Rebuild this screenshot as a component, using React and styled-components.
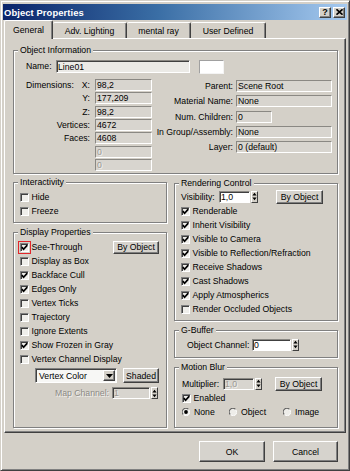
import styled, { createGlobalStyle } from "styled-components";

const GlobalStyle = createGlobalStyle`
  * { box-sizing: border-box; }
  html, body { margin: 0; padding: 0; background: #d4d0c8; }
  body {
    font-family: "Liberation Sans", Arial, sans-serif;
    font-size: 8.7px;
    color: #000;
  }
`;

function CheckMark() {
  return (
    <svg width="7" height="7" viewBox="0 0 7 7">
      <path d="M0.8 3.1 L2.6 5.2 L6.3 1.1" fill="none" stroke="#000" strokeWidth="1.7" />
    </svg>
  );
}

function Check({ label, checked, marked }) {
  return (
    <CheckItem>
      <CheckBox $marked={marked}>{checked && <CheckMark />}</CheckBox>
      <span>{label}</span>
    </CheckItem>
  );
}

function Radio({ label, selected }) {
  return (
    <RadioItem>
      <svg width="8" height="8" viewBox="0 0 8 8">
        <circle cx="4" cy="4" r="3.4" fill="#eeede9" />
        <path d="M1.3 6.5 A3.5 3.5 0 0 1 6.5 1.3" stroke="#606060" strokeWidth="1.1" fill="none" />
        <path d="M6.7 1.6 A3.5 3.5 0 0 1 1.6 6.7" stroke="#ffffff" strokeWidth="1" fill="none" />
        {selected && <circle cx="4" cy="4" r="1.9" fill="#000" />}
      </svg>
      <span>{label}</span>
    </RadioItem>
  );
}

function Spinner() {
  return (
    <Spin>
      <svg width="5" height="9" viewBox="0 0 5 9">
        <path d="M2.5 0.8 L4.6 3.4 L0.4 3.4 Z M0.4 5.6 L4.6 5.6 L2.5 8.2 Z" fill="#000" />
      </svg>
    </Spin>
  );
}

export default function App() {
  return (
    <>
      <GlobalStyle />
      <Window>
        <TitleBar>
          <Title>Object Properties</Title>
          <CapButton>?</CapButton>
          <CapButton>
            <svg width="7" height="6" viewBox="0 0 7 6">
              <path d="M0.5 0.3 L6.5 5.7 M6.5 0.3 L0.5 5.7" stroke="#000" strokeWidth="1.6" />
            </svg>
          </CapButton>
        </TitleBar>

        <Tabs>
          <Tab $w={49} $active>General</Tab>
          <Tab $w={74}>Adv. Lighting</Tab>
          <Tab $w={64}>mental ray</Tab>
          <Tab $w={75}>User Defined</Tab>
        </Tabs>

        <Panel>
          <Group $h={124} $pad="9px 0 0 12px">
            <Legend>Object Information</Legend>
            <NameRow>
              <NameLabel>Name:</NameLabel>
              <Field $w={134} $h={13} $tone="light" $deep>Line01</Field>
              <Swatch />
            </NameRow>
            <InfoColumns>
              <DimGrid>
                <DimLabel>
                  <span>Dimensions:</span>
                  <span>X:</span>
                </DimLabel>
                <Field $w={57}>98,2</Field>
                <RightLabel>Y:</RightLabel>
                <Field $w={57}>177,209</Field>
                <RightLabel>Z:</RightLabel>
                <Field $w={57}>98,2</Field>
                <RightLabel>Vertices:</RightLabel>
                <Field $w={57}>4672</Field>
                <RightLabel>Faces:</RightLabel>
                <Field $w={57}>4608</Field>
                <RightLabel />
                <Field $w={57} $disabled>0</Field>
                <RightLabel />
                <Field $w={57} $disabled>0</Field>
              </DimGrid>
              <LinkGrid>
                <RightLabel>Parent:</RightLabel>
                <Field $w={96}>Scene Root</Field>
                <RightLabel>Material Name:</RightLabel>
                <Field $w={96}>None</Field>
                <RightLabel>Num. Children:</RightLabel>
                <Field $w={36}>0</Field>
                <RightLabel>In Group/Assembly:</RightLabel>
                <Field $w={96}>None</Field>
                <RightLabel>Layer:</RightLabel>
                <Field $w={96}>0 (default)</Field>
              </LinkGrid>
            </InfoColumns>
          </Group>

          <Columns>
            <Column $w={154}>
              <Group $h={41} $pad="7px 0 0 6px">
                <Legend>Interactivity</Legend>
                <Check label="Hide" />
                <Check label="Freeze" />
              </Group>

              <Group $h={196} $pad="7px 7px 0 6px">
                <Legend>Display Properties</Legend>
                <ButtonRow>
                  <Check label="See-Through" checked marked />
                  <Btn $w={46} $h={13}>By Object</Btn>
                </ButtonRow>
                <Check label="Display as Box" />
                <Check label="Backface Cull" checked />
                <Check label="Edges Only" checked />
                <Check label="Vertex Ticks" />
                <Check label="Trajectory" />
                <Check label="Ignore Extents" />
                <Check label="Show Frozen in Gray" checked />
                <Check label="Vertex Channel Display" />
                <ComboRow>
                  <Combo>
                    <ComboText>Vertex Color</ComboText>
                    <ComboArrow>
                      <svg width="7" height="4" viewBox="0 0 7 4">
                        <path d="M0 0 L7 0 L3.5 4 Z" fill="#000" />
                      </svg>
                    </ComboArrow>
                  </Combo>
                  <Btn $w={36} $h={15}>Shaded</Btn>
                </ComboRow>
                <MapRow>
                  <FieldLabel $w={92} $right $disabled>Map Channel:</FieldLabel>
                  <Field $w={38} $disabled $deep>1</Field>
                  <Spinner />
                </MapRow>
              </Group>
            </Column>

            <Column $w={164} $top={1}>
              <Group $h={138} $pad="5px 0 0 6px">
                <Legend>Rendering Control</Legend>
                <ValueRow>
                  <FieldLabel $w={38}>Visibility:</FieldLabel>
                  <Field $w={31} $tone="white" $deep>1,0</Field>
                  <Spinner />
                  <Btn $w={47} $h={14} $gap={18}>By Object</Btn>
                </ValueRow>
                <Check label="Renderable" checked />
                <Check label="Inherit Visibility" checked />
                <Check label="Visible to Camera" checked />
                <Check label="Visible to Reflection/Refraction" checked />
                <Check label="Receive Shadows" checked />
                <Check label="Cast Shadows" checked />
                <Check label="Apply Atmospherics" checked />
                <Check label="Render Occluded Objects" />
              </Group>

              <Group $h={28} $pad="6px 0 0 12px">
                <Legend>G-Buffer</Legend>
                <ValueRow>
                  <FieldLabel $w={65}>Object Channel:</FieldLabel>
                  <Field $w={39} $tone="white" $deep>0</Field>
                  <Spinner />
                </ValueRow>
              </Group>

              <Group $h={61} $pad="8px 0 0 7px">
                <Legend>Motion Blur</Legend>
                <ValueRow>
                  <FieldLabel $w={41}>Multiplier:</FieldLabel>
                  <Field $w={31} $disabled $deep>1,0</Field>
                  <Spinner />
                  <Btn $w={47} $h={14} $gap={13}>By Object</Btn>
                </ValueRow>
                <Check label="Enabled" checked />
                <RadioRow>
                  <Radio label="None" selected />
                  <Radio label="Object" />
                  <Radio label="Image" />
                </RadioRow>
              </Group>
            </Column>
          </Columns>
        </Panel>

        <Footer>
          <Btn $w={66} $h={21}>OK</Btn>
          <Btn $w={65} $h={21}>Cancel</Btn>
        </Footer>
      </Window>
    </>
  );
}

const Window = styled.div`
  width: 350px;
  height: 471px;
  display: flex;
  flex-direction: column;
  padding: 3px 2px 2px 2px;
  background: #d4d0c8;
  border: 1px solid;
  border-color: #d4d0c8 #404040 #404040 #d4d0c8;
  box-shadow: inset 1px 1px 0 #ffffff, inset -1px -1px 0 #808080;
`;

const TitleBar = styled.div`
  height: 16px;
  display: flex;
  align-items: center;
  gap: 2px;
  padding: 0 2px 0 1px;
  background: linear-gradient(to right, #0a246a, #3a6ea5 45%, #a6caf0);
  color: #ffffff;
`;

const Title = styled.div`
  flex: 1;
  font-size: 9.4px;
  font-weight: bold;
  letter-spacing: 0.1px;
`;

const CapButton = styled.div`
  width: 12px;
  height: 11px;
  display: flex;
  align-items: center;
  justify-content: center;
  background: #d4d0c8;
  color: #000;
  font-size: 9px;
  font-weight: bold;
  border: 1px solid;
  border-color: #ffffff #404040 #404040 #ffffff;
  box-shadow: inset -1px -1px 0 #808080;
`;

const Tabs = styled.div`
  height: 18px;
  display: flex;
  align-items: flex-end;
  padding-left: 1px;
`;

const Tab = styled.div`
  width: ${(p) => p.$w}px;
  height: ${(p) => (p.$active ? 19 : 16)}px;
  margin-bottom: ${(p) => (p.$active ? -1 : 0)}px;
  position: relative;
  z-index: ${(p) => (p.$active ? 1 : 0)};
  display: flex;
  align-items: center;
  justify-content: center;
  background: #d4d0c8;
  border-top: 1px solid #ffffff;
  border-left: ${(p) => (p.$active ? "1px solid #ffffff" : "none")};
  border-right: 1px solid #404040;
  box-shadow: inset -1px 0 0 #808080;
  border-radius: 2px 2px 0 0;
`;

const Panel = styled.div`
  height: 395px;
  margin: 0 1px;
  padding: 11px 7px 0 8px;
  border: 1px solid;
  border-color: #ffffff #404040 #404040 #ffffff;
  box-shadow: inset -1px -1px 0 #808080;
`;

const Group = styled.div`
  position: relative;
  height: ${(p) => p.$h}px;
  padding: ${(p) => p.$pad};
  border: 1px solid #808080;
  box-shadow: inset 1px 1px 0 #ffffff, 1px 1px 0 #ffffff;
`;

const Legend = styled.span`
  position: absolute;
  top: -6px;
  left: 4px;
  padding: 0 2px;
  line-height: 11px;
  background: #d4d0c8;
`;

const NameRow = styled.div`
  height: 14px;
  display: flex;
  align-items: flex-start;
`;

const NameLabel = styled.div`
  width: 30px;
  line-height: 13px;
`;

const Swatch = styled.div`
  width: 25px;
  height: 14px;
  margin-left: 9px;
  background: #ffffff;
  border: 1px solid;
  border-color: #a0a0a0 #f4f4f4 #f4f4f4 #a0a0a0;
`;

const InfoColumns = styled.div`
  display: flex;
  align-items: flex-start;
  margin-top: 5px;
`;

const DimGrid = styled.div`
  display: grid;
  grid-template-columns: 64px 57px;
  grid-auto-rows: 12px;
  column-gap: 5px;
  row-gap: 1.33px;
`;

const LinkGrid = styled.div`
  display: grid;
  grid-template-columns: 78px 96px;
  grid-auto-rows: 12px;
  column-gap: 3px;
  row-gap: 3.25px;
  margin: 1px 0 0 3px;
`;

const DimLabel = styled.div`
  display: flex;
  justify-content: space-between;
  line-height: 12px;
`;

const RightLabel = styled.div`
  text-align: right;
  line-height: 12px;
  white-space: nowrap;
`;

const Field = styled.div`
  width: ${(p) => p.$w}px;
  height: ${(p) => p.$h || 12}px;
  flex: none;
  display: flex;
  align-items: center;
  padding: 0 1px;
  overflow: hidden;
  white-space: nowrap;
  background: ${(p) =>
    p.$tone === "white" ? "#ffffff" : p.$tone === "light" ? "#ebeae6" : "#d8d5cf"};
  color: ${(p) => (p.$disabled ? "#9a9893" : "#000")};
  text-shadow: ${(p) => (p.$disabled ? "1px 1px 0 #f2f1ee" : "none")};
  border: 1px solid;
  border-color: #8a8883 #ffffff #ffffff #8a8883;
  box-shadow: ${(p) => (p.$deep ? "inset 1px 1px 0 #404040" : "none")};
`;

const Columns = styled.div`
  display: flex;
  gap: 7px;
  margin-top: 8px;
`;

const Column = styled.div`
  width: ${(p) => p.$w}px;
  display: flex;
  flex-direction: column;
  gap: 9px;
  padding-top: ${(p) => p.$top || 0}px;
`;

const CheckItem = styled.div`
  height: 14px;
  display: flex;
  align-items: center;
  gap: 2.5px;
  white-space: nowrap;
`;

const CheckBox = styled.span`
  width: 9px;
  height: 9px;
  flex: none;
  display: flex;
  align-items: center;
  justify-content: center;
  background: #efeeea;
  border: 1px solid;
  border-color: #808080 #ffffff #ffffff #808080;
  box-shadow: inset 1px 1px 0 #404040;
  outline: ${(p) => (p.$marked ? "1.5px solid #e3262b" : "none")};
  outline-offset: 1.5px;
`;

const ButtonRow = styled.div`
  height: 14px;
  display: flex;
  align-items: center;
  justify-content: space-between;
`;

const Btn = styled.div`
  width: ${(p) => p.$w}px;
  height: ${(p) => p.$h}px;
  flex: none;
  margin-left: ${(p) => p.$gap || 0}px;
  display: flex;
  align-items: center;
  justify-content: center;
  background: #d6d3cd;
  border: 1px solid;
  border-color: #ffffff #404040 #404040 #ffffff;
  box-shadow: inset -1px -1px 0 #808080;
  white-space: nowrap;
`;

const ComboRow = styled.div`
  display: flex;
  gap: 6px;
  margin: 2px 0 0 15px;
`;

const Combo = styled.div`
  width: 83px;
  height: 15px;
  display: flex;
  align-items: center;
  padding: 1px 1px 1px 3px;
  background: #f7f7f5;
  border: 1px solid;
  border-color: #808080 #ffffff #ffffff #808080;
  box-shadow: inset 1px 1px 0 #404040;
`;

const ComboText = styled.span`
  flex: 1;
  padding-top: 1px;
`;

const ComboArrow = styled.span`
  width: 12px;
  height: 11px;
  display: flex;
  align-items: center;
  justify-content: center;
  background: #d4d0c8;
  border: 1px solid;
  border-color: #ffffff #404040 #404040 #ffffff;
  box-shadow: inset -1px -1px 0 #808080;
`;

const MapRow = styled.div`
  height: 14px;
  display: flex;
  align-items: center;
  margin-top: 3px;
`;

const ValueRow = styled.div`
  height: 15px;
  display: flex;
  align-items: center;
`;

const FieldLabel = styled.div`
  width: ${(p) => p.$w}px;
  flex: none;
  padding-right: ${(p) => (p.$right ? 3 : 0)}px;
  text-align: ${(p) => (p.$right ? "right" : "left")};
  white-space: nowrap;
  color: ${(p) => (p.$disabled ? "#8c8a85" : "#000")};
  text-shadow: ${(p) => (p.$disabled ? "1px 1px 0 #f2f1ee" : "none")};
`;

const Spin = styled.div`
  width: 7px;
  height: 12px;
  margin-left: 1px;
  flex: none;
  display: flex;
  align-items: center;
  justify-content: center;
  background: #d4d0c8;
  border: 1px solid;
  border-color: #ffffff #404040 #404040 #ffffff;
`;

const RadioRow = styled.div`
  height: 14px;
  display: flex;
  align-items: center;
`;

const RadioItem = styled.div`
  display: flex;
  align-items: center;
  gap: 4px;
  margin-right: ${() => 0}px;
  &:nth-child(1) { width: 47px; }
  &:nth-child(2) { width: 54px; }
`;

const Footer = styled.div`
  display: flex;
  justify-content: flex-end;
  gap: 8px;
  margin-top: 8px;
  padding-right: 9px;
`;
